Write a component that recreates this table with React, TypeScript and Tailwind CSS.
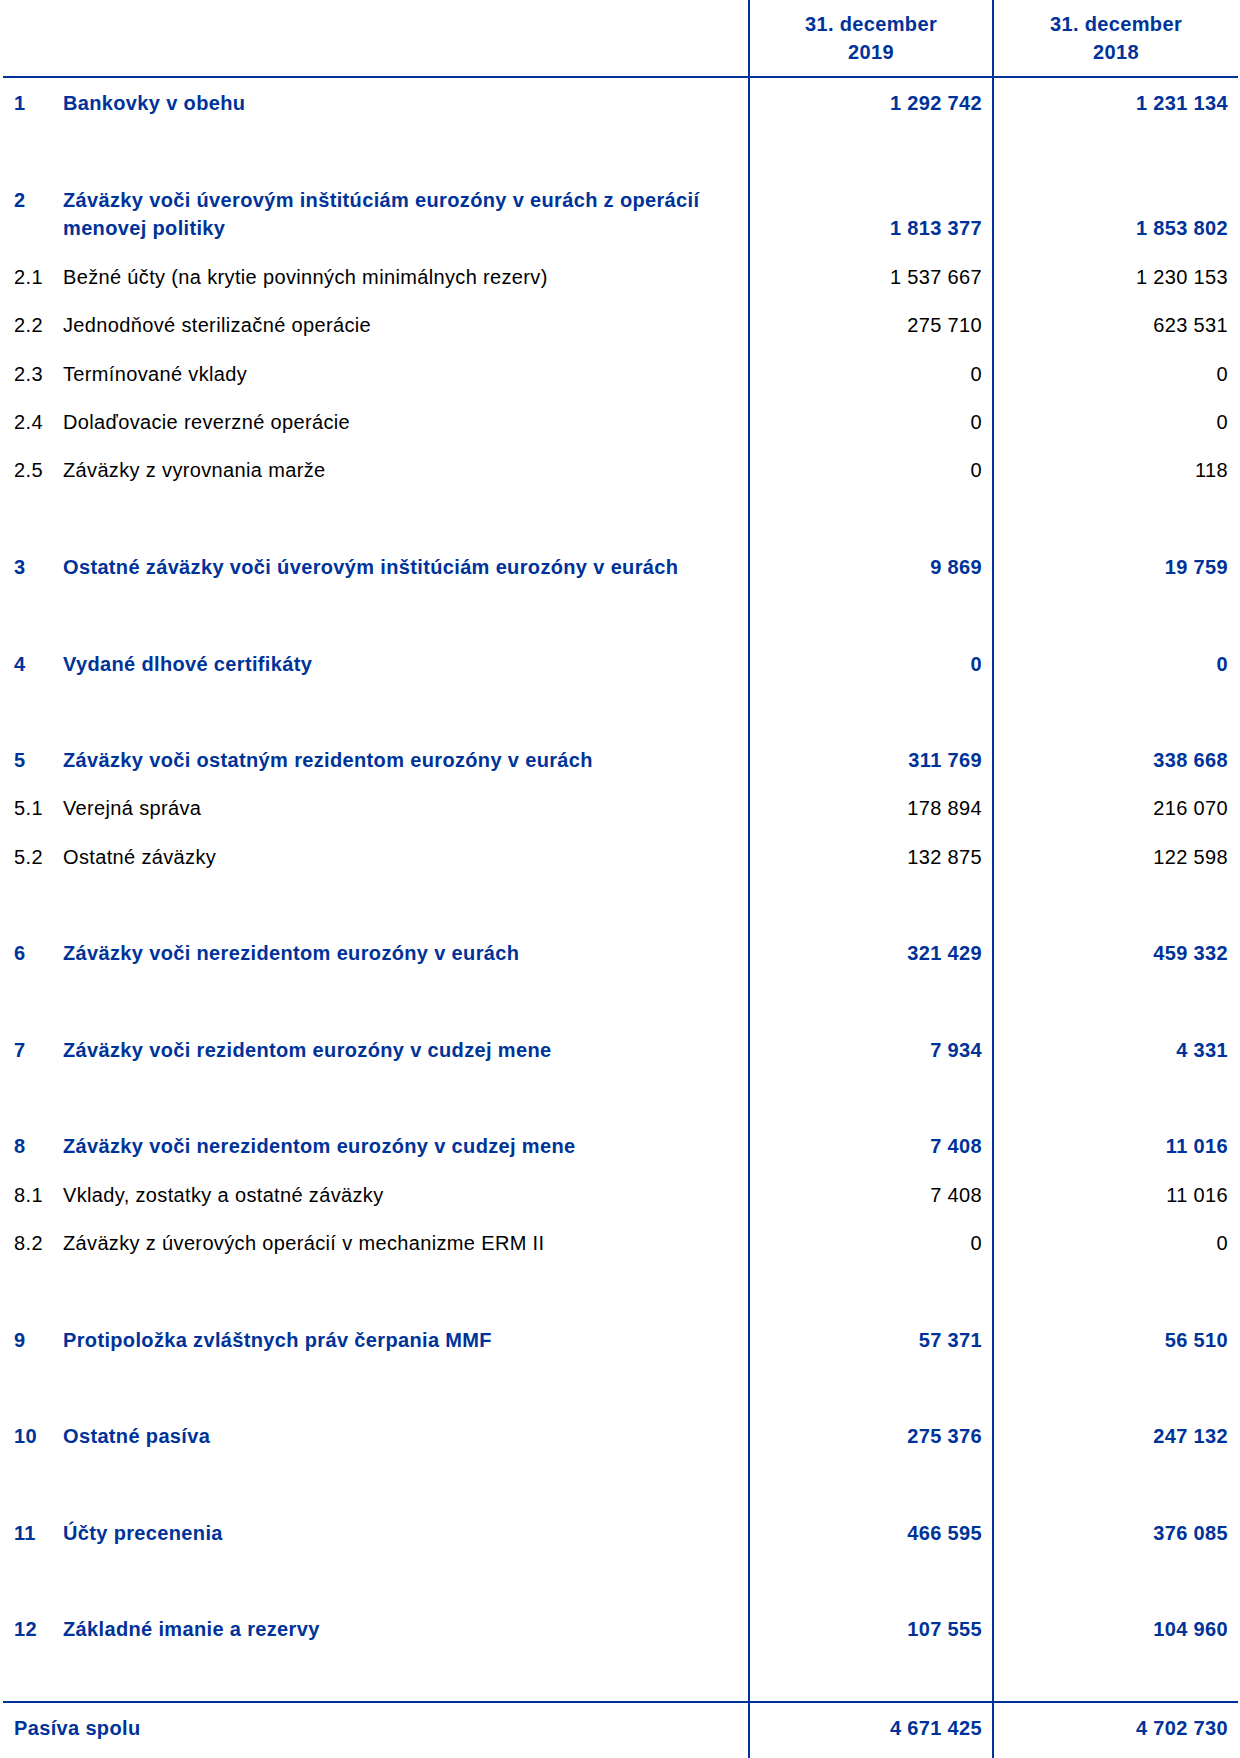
import React from 'react';

type Row =
  | { kind: 'main'; no: string; label: React.ReactNode; a: string; b: string; tall?: boolean }
  | { kind: 'sub'; no: string; label: string; a: string; b: string }
  | { kind: 'blank' };

const rows: Row[] = [
  { kind: 'main', no: '1', label: 'Bankovky v obehu', a: '1 292 742', b: '1 231 134' },
  { kind: 'blank' },
  {
    kind: 'main',
    no: '2',
    label: (
      <>
        Záväzky voči úverovým inštitúciám eurozóny v eurách z operácií
        <br />
        menovej politiky
      </>
    ),
    a: '1 813 377',
    b: '1 853 802',
    tall: true,
  },
  { kind: 'sub', no: '2.1', label: 'Bežné účty (na krytie povinných minimálnych rezerv)', a: '1 537 667', b: '1 230 153' },
  { kind: 'sub', no: '2.2', label: 'Jednodňové sterilizačné operácie', a: '275 710', b: '623 531' },
  { kind: 'sub', no: '2.3', label: 'Termínované vklady', a: '0', b: '0' },
  { kind: 'sub', no: '2.4', label: 'Dolaďovacie reverzné operácie', a: '0', b: '0' },
  { kind: 'sub', no: '2.5', label: 'Záväzky z vyrovnania marže', a: '0', b: '118' },
  { kind: 'blank' },
  { kind: 'main', no: '3', label: 'Ostatné záväzky voči úverovým inštitúciám eurozóny v eurách', a: '9 869', b: '19 759' },
  { kind: 'blank' },
  { kind: 'main', no: '4', label: 'Vydané dlhové certifikáty', a: '0', b: '0' },
  { kind: 'blank' },
  { kind: 'main', no: '5', label: 'Záväzky voči ostatným rezidentom eurozóny v eurách', a: '311 769', b: '338 668' },
  { kind: 'sub', no: '5.1', label: 'Verejná správa', a: '178 894', b: '216 070' },
  { kind: 'sub', no: '5.2', label: 'Ostatné záväzky', a: '132 875', b: '122 598' },
  { kind: 'blank' },
  { kind: 'main', no: '6', label: 'Záväzky voči nerezidentom eurozóny v eurách', a: '321 429', b: '459 332' },
  { kind: 'blank' },
  { kind: 'main', no: '7', label: 'Záväzky voči rezidentom eurozóny v cudzej mene', a: '7 934', b: '4 331' },
  { kind: 'blank' },
  { kind: 'main', no: '8', label: 'Záväzky voči nerezidentom eurozóny v cudzej mene', a: '7 408', b: '11 016' },
  { kind: 'sub', no: '8.1', label: 'Vklady, zostatky a ostatné záväzky', a: '7 408', b: '11 016' },
  { kind: 'sub', no: '8.2', label: 'Záväzky z úverových operácií v mechanizme ERM II', a: '0', b: '0' },
  { kind: 'blank' },
  { kind: 'main', no: '9', label: 'Protipoložka zvláštnych práv čerpania MMF', a: '57 371', b: '56 510' },
  { kind: 'blank' },
  { kind: 'main', no: '10', label: 'Ostatné pasíva', a: '275 376', b: '247 132' },
  { kind: 'blank' },
  { kind: 'main', no: '11', label: 'Účty precenenia', a: '466 595', b: '376 085' },
  { kind: 'blank' },
  { kind: 'main', no: '12', label: 'Základné imanie a rezervy', a: '107 555', b: '104 960' },
  { kind: 'blank' },
];

function Line({ row }: { row: Row }) {
  if (row.kind === 'blank') {
    return (
      <div className="flex h-[48.3px]">
        <div className="w-[745px]" />
        <div className="w-[244px] border-l-2 border-[#003399]" />
        <div className="w-[246px] border-l-2 border-[#003399]" />
      </div>
    );
  }
  const main = row.kind === 'main';
  const tall = main && row.tall;
  const tone = main ? 'font-bold text-[#003399]' : 'text-black';
  return (
    <div className={`flex ${tall ? 'h-[77.4px]' : 'h-[48.3px]'} ${tone}`}>
      <div className="w-[745px] flex items-center pl-[11px] pt-[2px]">
        <span className={`w-[49px] shrink-0 ${tall ? 'self-start mt-[9px]' : ''}`}>{row.no}</span>
        <span>{row.label}</span>
      </div>
      <div className="w-[244px] border-l-2 border-[#003399] flex items-center justify-end pr-[10px] pt-[2px]">
        <span className={tall ? 'pt-[28px]' : ''}>{row.a}</span>
      </div>
      <div className="w-[246px] border-l-2 border-[#003399] flex items-center justify-end pr-[10px] pt-[2px]">
        <span className={tall ? 'pt-[28px]' : ''}>{row.b}</span>
      </div>
    </div>
  );
}

export default function App() {
  return (
    <div
      className="w-[1240px] h-[1758px] bg-white overflow-hidden text-[20px] leading-[28px] tracking-[0.35px]"
      style={{ fontFamily: '"Liberation Sans", Arial, sans-serif' }}
    >
      <div className="ml-[3px] w-[1235px]">
        {/* header */}
        <div className="flex h-[78px] border-b-2 border-[#003399] font-bold text-[#003399]">
          <div className="w-[745px]" />
          <div className="w-[244px] border-l-2 border-[#003399] flex flex-col items-center justify-center pb-[1px]">
            <span>31. december</span>
            <span>2019</span>
          </div>
          <div className="w-[246px] border-l-2 border-[#003399] flex flex-col items-center justify-center pb-[1px]">
            <span>31. december</span>
            <span>2018</span>
          </div>
        </div>

        {rows.map((r, i) => (
          <Line key={i} row={r} />
        ))}

        {/* total */}
        <div className="flex h-[60px] border-t-2 border-[#003399] font-bold text-[#003399]">
          <div className="w-[745px] flex items-center pl-[11px] pb-[8px]">Pasíva spolu</div>
          <div className="w-[244px] border-l-2 border-[#003399] flex items-center justify-end pr-[10px] pb-[8px]">
            4 671 425
          </div>
          <div className="w-[246px] border-l-2 border-[#003399] flex items-center justify-end pr-[10px] pb-[8px]">
            4 702 730
          </div>
        </div>
      </div>
    </div>
  );
}
